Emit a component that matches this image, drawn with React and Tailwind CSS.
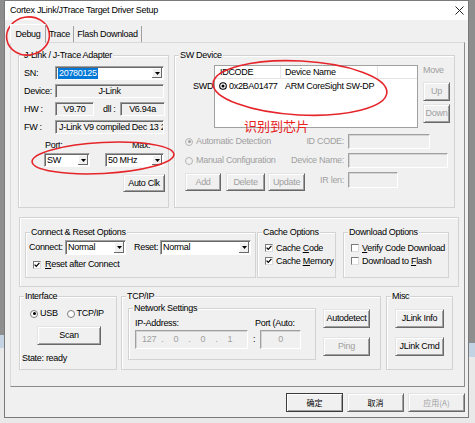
import React from 'react';

const sunken =
  'border border-t-[#a0a0a0] border-l-[#a0a0a0] border-r-white border-b-white shadow-[inset_1px_1px_0_#696969]';
const sunkenLight =
  'border border-t-[#a0a0a0] border-l-[#a0a0a0] border-r-white border-b-white shadow-[inset_1px_1px_0_#d4d4d4]';
const cjk = "[font-family:'Noto_Sans_CJK_SC',sans-serif]";

const Tri = () => (
  <svg width="5" height="3" viewBox="0 0 5 3">
    <path d="M0 0h5L2.5 3z" fill="#000" />
  </svg>
);

const Combo = ({ className = '', children }) => (
  <div className={`flex bg-white ${sunken} ${className}`}>
    <div className="flex-1 flex items-center pl-[2px] overflow-hidden whitespace-nowrap">{children}</div>
    <div className="w-[10px] my-[1px] mr-[1px] bg-[#f0f0f0] shadow-[inset_-1px_-1px_0_#696969,inset_1px_1px_0_#fff] flex items-center justify-center">
      <Tri />
    </div>
  </div>
);

const Btn = ({ className = '', disabled, def, children }) => (
  <div
    className={`flex items-center justify-center whitespace-nowrap bg-[#f0f0f0] border ${
      def ? 'border-[#3c3c3c]' : 'border-t-[#e3e3e3] border-l-[#e3e3e3] border-r-[#696969] border-b-[#696969]'
    } shadow-[inset_1px_1px_0_#fff,inset_-1px_-1px_0_#a0a0a0] ${disabled ? 'text-[#a0a0a0]' : ''} ${className}`}
  >
    {children}
  </div>
);

const Group = ({ label, className = '', children }) => (
  <div className={`relative border border-[#d3d3d3] shadow-[inset_1px_1px_0_#fff] ${className}`}>
    {label && <span className="absolute -top-[6px] left-[4px] px-[1px] bg-[#f0f0f0] whitespace-nowrap">{label}</span>}
    {children}
  </div>
);

const Check = ({ checked }) => (
  <span className="w-[8px] h-[8px] shrink-0 bg-white border border-t-[#7a7a7a] border-l-[#7a7a7a] border-r-[#dcdcdc] border-b-[#dcdcdc] flex items-center justify-center">
    {checked && (
      <svg width="6" height="6" viewBox="0 0 6 6">
        <path d="M0.6 2.6L2.3 4.4L5.4 0.9" fill="none" stroke="#000" strokeWidth="1.3" />
      </svg>
    )}
  </span>
);

const Radio = ({ checked, disabled }) => (
  <span
    className={`w-[8px] h-[8px] shrink-0 rounded-full border ${
      disabled ? 'bg-[#f0f0f0] border-[#b5b5b5]' : 'bg-white border-[#7a7a7a]'
    } flex items-center justify-center`}
  >
    {checked && <span className={`w-[3px] h-[3px] rounded-full ${disabled ? 'bg-[#a0a0a0]' : 'bg-black'}`} />}
  </span>
);

const Field = ({ className = '', children }) => (
  <div className={`flex items-center justify-center bg-[#f0f0f0] overflow-hidden whitespace-nowrap ${sunken} ${className}`}>
    {children}
  </div>
);

export default function App() {
  return (
    <div className="relative w-[475px] h-[423px] flex items-start overflow-hidden bg-[#e9e9e9] text-black text-[9px] leading-[11px] tracking-[-0.3px] [font-family:'Liberation_Sans','Noto_Sans_CJK_SC',sans-serif]">
      {/* desktop strip left */}
      <div className="w-[4px] shrink-0 flex flex-col">
        <div className="h-[335px] bg-[#8e8e8e]" />
        <div className="h-[13px] bg-[#c4d3e3]" />
      </div>

      {/* window */}
      <div className="w-[465px] h-[418px] shrink-0 border border-[#7a7a7a] flex flex-col bg-[#f0f0f0]">
        <div className="h-[19px] bg-white flex items-center justify-between pl-[5px] pr-[4px]">
          <span>Cortex JLink/JTrace Target Driver Setup</span>
          <svg width="9" height="9" viewBox="0 0 9 9">
            <path d="M0.5 0.5l8 8M8.5 0.5l-8 8" stroke="#222" strokeWidth="1" />
          </svg>
        </div>

        <div className="flex-1 pl-[5px] pt-[4px]">
          {/* tabs */}
          <div className="relative z-10 h-[19px] -mb-[1px] flex items-end">
            <div className="w-[36px] h-[19px] bg-[#f0f0f0] border-t border-l border-r border-t-white border-l-white border-r-[#a0a0a0] flex items-center justify-center">
              Debug
            </div>
            <div className="w-[28px] h-[16px] mb-[1px] border-r border-r-[#a0a0a0] flex items-center justify-center">Trace</div>
            <div className="w-[68px] h-[16px] mb-[1px] border-r border-r-[#a0a0a0] flex items-center justify-center">
              Flash Download
            </div>
          </div>

          {/* tab panel */}
          <div className="w-[455px] h-[345px] border border-t-[#d9d9d9] border-l-[#d9d9d9] border-r-[#8c8c8c] border-b-[#8c8c8c] pl-[7px] pt-[12px]">
            <div className="flex gap-[5px]">
              {/* adapter */}
              <Group label="J-Link / J-Trace Adapter" className="w-[151px] h-[153px] flex flex-col pt-[10px]">
                <div className="flex items-center h-[14px]">
                  <span className="w-[36px] pl-[5px]">SN:</span>
                  <Combo className="w-[109px] h-[14px]">
                    <span className="bg-[#0078d7] text-white px-[1px]">20780125</span>
                  </Combo>
                </div>
                <div className="flex items-center h-[14px] mt-[4px]">
                  <span className="w-[36px] pl-[5px]">Device:</span>
                  <Field className="w-[109px] h-[14px]">J-Link</Field>
                </div>
                <div className="flex items-center h-[14px] mt-[4px]">
                  <span className="w-[36px] pl-[5px]">HW :</span>
                  <Field className="w-[39px] h-[14px]">V9.70</Field>
                  <span className="ml-[9px] w-[17px]">dll :</span>
                  <Field className="w-[45px] h-[14px]">V6.94a</Field>
                </div>
                <div className="flex items-center h-[14px] mt-[4px]">
                  <span className="w-[36px] pl-[5px]">FW :</span>
                  <Field className="w-[109px] h-[14px] !justify-start pl-[3px]">J-Link V9 compiled Dec 13 2018 11:14:50</Field>
                </div>
                <div className="flex mt-[6px] pl-[25px]">
                  <div className="flex flex-col w-[46px]">
                    <span className="pl-[1px] h-[11px]">Port:</span>
                    <Combo className="mt-[2px] w-[46px] h-[14px]">SW</Combo>
                  </div>
                  <div className="flex flex-col w-[59px] ml-[15px]">
                    <span className="pl-[27px] h-[11px]">Max:</span>
                    <Combo className="mt-[2px] w-[59px] h-[14px]">50 MHz</Combo>
                  </div>
                </div>
                <Btn className="self-end mr-[3px] mt-[7px] w-[42px] h-[18px]">Auto Clk</Btn>
              </Group>

              {/* SW device */}
              <Group label="SW Device" className="w-[281px] h-[153px] flex flex-col">
                <div className="flex pt-[9px] pl-[18px]">
                  <span className="w-[21px] mt-[16px] h-[11px] overflow-hidden whitespace-nowrap">SWD</span>
                  <div className="w-[204px] h-[63px] bg-white border border-[#a0a0a0] flex flex-col">
                    <div className="h-[13px] flex items-center border-b border-[#e5e5e5]">
                      <span className="w-[66px] h-full flex items-center pl-[5px] border-r border-[#e5e5e5]">IDCODE</span>
                      <span className="w-[97px] h-full flex items-center pl-[4px] border-r border-[#e5e5e5]">Device Name</span>
                      <span className="flex-1" />
                    </div>
                    <div className="flex items-center h-[12px] mt-[1px]">
                      <span className="w-[66px] flex items-center pl-[4px] gap-[2px] whitespace-nowrap">
                        <svg width="8" height="8" viewBox="0 0 8 8">
                          <circle cx="4" cy="4" r="3.3" fill="none" stroke="#000" strokeWidth="1.1" />
                          <circle cx="4" cy="4" r="1.5" fill="#000" />
                        </svg>
                        0x2BA01477
                      </span>
                      <span className="pl-[4px] whitespace-nowrap">ARM CoreSight SW-DP</span>
                    </div>
                  </div>
                  <div className="ml-[5px] w-[27px] flex flex-col">
                    <span className="h-[11px] text-[#a0a0a0]">Move</span>
                    <Btn disabled className="mt-[6px] w-[27px] h-[19px]">Up</Btn>
                    <Btn disabled className="mt-[3px] w-[27px] h-[19px]">Down</Btn>
                  </div>
                </div>

                <span className={`absolute left-[69px] top-[62px] text-[13px] leading-[15px] tracking-normal text-[#e8231f] ${cjk}`}>
                  识别到芯片
                </span>

                <div className="flex items-center h-[15px] mt-[6px] pl-[10px] text-[#a0a0a0]">
                  <div className="flex-1 flex items-center">
                    <Radio checked disabled />
                    <span className="ml-[3px]">Automatic Detection</span>
                  </div>
                  <span>ID CODE:</span>
                  <div className="ml-[4px] w-[106px]">
                    <div className={`w-[82px] h-[15px] ${sunkenLight}`} />
                  </div>
                </div>
                <div className="flex items-center h-[15px] mt-[4px] pl-[10px] text-[#a0a0a0]">
                  <div className="flex-1 flex items-center">
                    <Radio disabled />
                    <span className="ml-[3px]">Manual Configuration</span>
                  </div>
                  <span>Device Name:</span>
                  <div className="ml-[4px] w-[106px]">
                    <div className={`w-[100px] h-[15px] ${sunkenLight}`} />
                  </div>
                </div>
                <div className="flex items-start h-[19px] mt-[4px] pl-[10px] text-[#a0a0a0]">
                  <div className="flex-1 flex">
                    <Btn disabled className="mt-[1px] w-[36px] h-[18px]">Add</Btn>
                    <Btn disabled className="mt-[1px] ml-[5px] w-[39px] h-[18px]">Delete</Btn>
                    <Btn disabled className="mt-[1px] ml-[3px] w-[37px] h-[18px]">Update</Btn>
                  </div>
                  <span className="h-[16px] flex items-center">IR len:</span>
                  <div className="ml-[4px] w-[106px]">
                    <div className={`w-[50px] h-[16px] ${sunkenLight}`} />
                  </div>
                </div>
              </Group>
            </div>

            {/* options */}
            <Group className="ml-[1px] mt-[9px] w-[440px] h-[70px] flex pt-[14px] pl-[5px]">
              <Group label="Connect & Reset Options" className="w-[231px] h-[46px] flex flex-col pt-[7px] pl-[3px]">
                <div className="flex items-center h-[15px]">
                  <span className="w-[36px]">Connect:</span>
                  <Combo className="w-[61px] h-[15px]">Normal</Combo>
                  <span className="ml-[8px] w-[26px]">Reset:</span>
                  <Combo className="w-[91px] h-[15px]">Normal</Combo>
                </div>
                <div className="flex items-center h-[11px] mt-[4px] pl-[4px]">
                  <Check checked />
                  <span className="ml-[4px]">
                    <span className="underline">R</span>eset after Connect
                  </span>
                </div>
              </Group>
              <Group label="Cache Options" className="ml-[1px] w-[79px] h-[46px] flex flex-col pt-[9px] pl-[7px] gap-[1px]">
                <div className="flex items-center h-[12px]">
                  <Check checked />
                  <span className="ml-[3px] whitespace-nowrap">
                    Cache <span className="underline">C</span>ode
                  </span>
                </div>
                <div className="flex items-center h-[12px]">
                  <Check checked />
                  <span className="ml-[3px] whitespace-nowrap">
                    Cache <span className="underline">M</span>emory
                  </span>
                </div>
              </Group>
              <Group label="Download Options" className="ml-[7px] w-[106px] h-[46px] flex flex-col pt-[9px] pl-[7px] gap-[1px]">
                <div className="flex items-center h-[12px]">
                  <Check />
                  <span className="ml-[3px] whitespace-nowrap">
                    <span className="underline">V</span>erify Code Download
                  </span>
                </div>
                <div className="flex items-center h-[12px]">
                  <Check />
                  <span className="ml-[3px] whitespace-nowrap">
                    Download to <span className="underline">F</span>lash
                  </span>
                </div>
              </Group>
            </Group>

            {/* bottom groups */}
            <div className="flex ml-[1px] mt-[9px]">
              <Group label="Interface" className="w-[98px] h-[74px] flex flex-col pt-[11px]">
                <div className="flex items-center h-[11px] pl-[10px]">
                  <Radio checked />
                  <span className="ml-[2px]">USB</span>
                  <span className="ml-[9px]">
                    <Radio />
                  </span>
                  <span className="ml-[2px]">TCP/IP</span>
                </div>
                <Btn className="ml-[17px] mt-[7px] w-[64px] h-[19px]">Scan</Btn>
                <span className="mt-[8px] pl-[2px] h-[11px]">State: ready</span>
              </Group>

              <Group label="TCP/IP" className="ml-[4px] w-[260px] h-[74px] flex pl-[6px] pt-[11px]">
                <Group label="Network Settings" className="w-[188px] h-[52px] flex flex-col pl-[6px] pt-[9px]">
                  <div className="flex h-[11px]">
                    <span className="w-[46px] whitespace-nowrap">IP-Address:</span>
                    <span className="ml-[74px] whitespace-nowrap">Port (Auto:</span>
                  </div>
                  <div className="flex items-center mt-[1px]">
                    <div className={`w-[113px] h-[19px] bg-[#f0f0f0] flex items-center pl-[6px] text-[#a0a0a0] ${sunkenLight}`}>
                      {['127', '.', '0', '.', '0', '.', '1'].map((t, i) => (
                        <span key={i} className="w-[13.5px] text-center whitespace-nowrap">
                          {t}
                        </span>
                      ))}
                    </div>
                    <span className="w-[12px] text-center">:</span>
                    <div className={`w-[41px] h-[19px] bg-[#f0f0f0] flex items-center justify-center text-[#a0a0a0] ${sunkenLight}`}>
                      0
                    </div>
                  </div>
                </Group>
                <div className="ml-[7px] flex flex-col">
                  <Btn className="mt-[1px] w-[47px] h-[19px]">Autodetect</Btn>
                  <Btn disabled className="mt-[9px] w-[47px] h-[19px]">Ping</Btn>
                </div>
              </Group>

              <Group label="Misc" className="ml-[5px] w-[67px] h-[74px] flex flex-col pl-[8px] pt-[12px]">
                <Btn className="w-[49px] h-[19px]">JLink Info</Btn>
                <Btn className="mt-[9px] w-[49px] h-[19px]">JLink Cmd</Btn>
              </Group>
            </div>
          </div>

          {/* dialog buttons */}
          <div className={`mt-[6px] w-[455px] flex justify-end gap-[4px] text-[8px] tracking-normal ${cjk}`}>
            <Btn def className="w-[57px] h-[19px]">确定</Btn>
            <Btn className="w-[57px] h-[19px]">取消</Btn>
            <Btn disabled className="w-[57px] h-[19px]">应用(A)</Btn>
          </div>
        </div>
      </div>

      {/* desktop strip right */}
      <div className="w-[6px] shrink-0 flex flex-col">
        <div className="h-[343px] bg-[#8e8e8e]" />
        <div className="h-[14px] bg-[#c4d3e3]" />
      </div>

      {/* red hand-drawn marks */}
      <svg className="absolute inset-0 pointer-events-none" width="475" height="423" viewBox="0 0 475 423">
        <ellipse cx="28" cy="36" rx="21.5" ry="19" fill="none" stroke="#e5252a" strokeWidth="1.6" transform="rotate(-10 28 36)" />
        <ellipse cx="103" cy="158" rx="71" ry="15.5" fill="none" stroke="#e5252a" strokeWidth="1.6" transform="rotate(-3 103 158)" />
        <ellipse cx="300" cy="88" rx="87" ry="27" fill="none" stroke="#e5252a" strokeWidth="1.6" transform="rotate(3 300 88)" />
      </svg>
    </div>
  );
}
